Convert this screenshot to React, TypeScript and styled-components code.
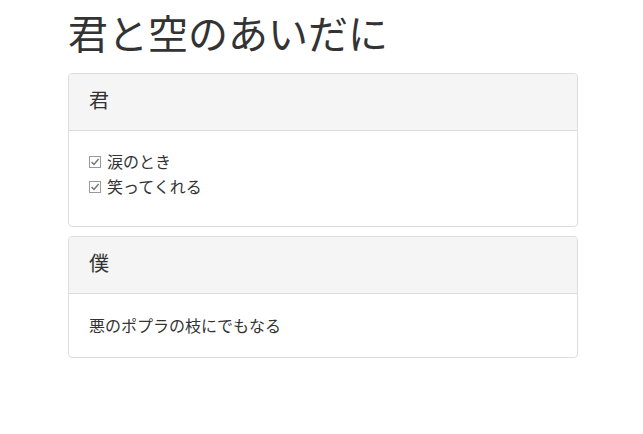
import React from "react";
import styled, { createGlobalStyle } from "styled-components";

const Global = createGlobalStyle`
  html, body { margin: 0; padding: 0; background: #fff; }
  body {
    font-family: "Noto Sans CJK JP", "Noto Sans", sans-serif;
    color: #333;
  }
`;

const Container = styled.div`
  width: 510px;
  margin: 0 0 0 68px;
`;

const Title = styled.h1`
  margin: 10px 0 19px;
  font-size: 40px;
  font-weight: 400;
  line-height: 44px;
  color: #333;
`;

const Panel = styled.section`
  border: 1px solid #ddd;
  border-radius: 4px;
  background: #fff;
  margin-bottom: 9px;
  overflow: hidden;
`;

const Heading = styled.div`
  background: #f5f5f5;
  border-bottom: 1px solid #ddd;
  height: 57px;
  padding: 0 20px 5px;
  box-sizing: border-box;
  display: flex;
  align-items: center;
  font-size: 20px;
  line-height: 24px;
`;

const Body = styled.div`
  padding: 19px 20px;
  font-size: 16px;
  line-height: 25px;
`;

const List = styled.ul`
  list-style: none;
  margin: -1px 0 8px;
  padding: 0;
`;

const Item = styled.li`
  display: flex;
  align-items: center;
  height: 25px;
`;

const Box = styled.svg`
  width: 12px;
  height: 12px;
  margin-right: 6px;
  flex: none;
`;

const Text = styled.p`
  margin: 0;
`;

const Check = () => (
  <Box viewBox="0 0 12 12">
    <rect x="0.5" y="0.5" width="11" height="11" fill="#fff" stroke="#999" />
    <path d="M2.5 6 L5 8.5 L9.6 3" fill="none" stroke="#777" strokeWidth="1.5" />
  </Box>
);

export default function App() {
  return (
    <>
      <Global />
      <Container>
        <Title>君と空のあいだに</Title>
        <Panel>
          <Heading>君</Heading>
          <Body>
            <List>
              <Item><Check />涙のとき</Item>
              <Item><Check />笑ってくれる</Item>
            </List>
          </Body>
        </Panel>
        <Panel>
          <Heading>僕</Heading>
          <Body>
            <Text>悪のポプラの枝にでもなる</Text>
          </Body>
        </Panel>
      </Container>
    </>
  );
}
